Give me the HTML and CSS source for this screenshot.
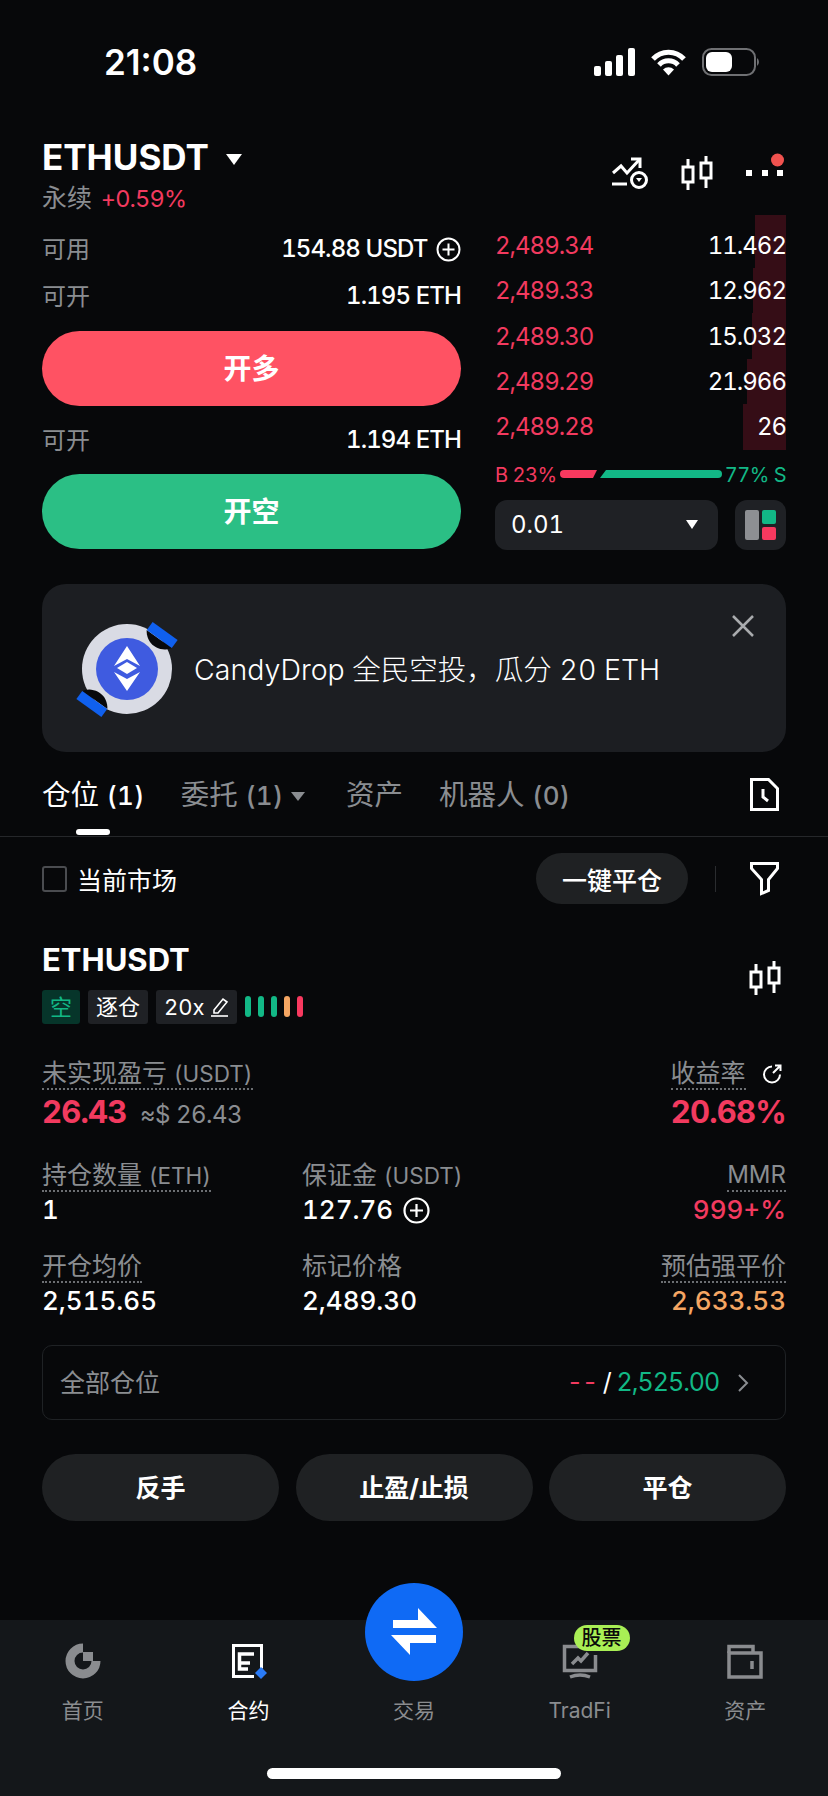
FILE: index.html
```html
<!DOCTYPE html>
<html lang="zh-CN">
<head>
  <meta charset="UTF-8">
  <meta name="viewport" content="width=device-width, initial-scale=1.0">
  <title>ETHUSDT</title>
  <link rel="stylesheet" href="styles.css">
</head>
<body>
  <div class="status">
    <span class="time">21:08</span>
    <svg class="status-icons" width="166" height="28" viewBox="0 0 166 28">
      <!-- signal -->
      <g fill="#fff">
        <rect x="0" y="18" width="7" height="10" rx="2"/>
        <rect x="11" y="13" width="7" height="15" rx="2"/>
        <rect x="22" y="7" width="7" height="21" rx="2"/>
        <rect x="34" y="0" width="7" height="28" rx="2"/>
      </g>
      <!-- wifi -->
      <g fill="none" stroke="#fff" stroke-width="5">
        <path d="M59 11a21 21 0 0 1 31 0"/>
        <path d="M65 17a13 13 0 0 1 19 0"/>
      </g>
      <path d="M69 21.500a8 8 0 0 1 11 0l-5.500 6z" fill="#fff"/>
      <!-- battery -->
      <rect x="109" y="1" width="52" height="26" rx="8.500" fill="none" stroke="#6f7073" stroke-width="2"/>
      <rect x="112" y="4" width="26" height="20" rx="6" fill="#fff"/>
      <path d="M163 10a5 5 0 0 1 0 8z" fill="#6f7073"/>
    </svg>
  </div>

  <header class="head">
    <div>
      <h1 class="pair">ETHUSDT <i class="caret caret-lg"></i></h1>
      <div class="pair-sub">永续 <span class="red">+0.59%</span></div>
    </div>
    <div class="head-icons">
      <svg width="36" height="34" viewBox="0 0 36 34" fill="none" stroke="#fff" stroke-width="3">
        <path d="M1 17l8-7 6 7 12-13"/>
        <path d="M19 3h9v9"/>
        <path d="M0 28h15"/>
        <circle cx="27" cy="24" r="7.500"/>
        <path d="M24 22h6l-3 4z" fill="#fff" stroke="none"/>
      </svg>
      <svg width="32" height="34" viewBox="0 0 32 34" fill="none" stroke="#fff" stroke-width="3">
        <rect x="2" y="11" width="10" height="15"/>
        <rect x="20" y="7" width="10" height="15"/>
        <path d="M7 3v8M7 26v8M25 0v7M25 22v10"/>
      </svg>
      <svg width="40" height="34" viewBox="0 0 40 34">
        <g fill="#fff">
          <rect x="0" y="14" width="6" height="6"/>
          <rect x="16" y="14" width="6" height="6"/>
          <rect x="31" y="14" width="6" height="6"/>
        </g>
        <circle cx="31.500" cy="4" r="6.500" fill="#f0524f"/>
      </svg>
    </div>
  </header>

  <section class="trade">
    <div class="order">
      <div class="kv"><span class="muted">可用</span><span>154.88 USDT
        <svg class="plus" width="25" height="25" viewBox="0 0 25 25" fill="none" stroke="#fff" stroke-width="2"><circle cx="12.500" cy="12.500" r="11"/><path d="M12.500 6.500v12M6.500 12.500h12"/></svg></span></div>
      <div class="kv"><span class="muted">可开</span><span>1.195 ETH</span></div>
      <button class="big-btn long">开多</button>
      <div class="kv"><span class="muted">可开</span><span>1.194 ETH</span></div>
      <button class="big-btn short">开空</button>
    </div>

    <div class="book">
      <div class="ob-row first"><i class="depth" style="width:31px"></i><span class="red">2,489.34</span><span class="qty">11.462</span></div>
      <div class="ob-row"><i class="depth" style="width:33px"></i><span class="red">2,489.33</span><span class="qty">12.962</span></div>
      <div class="ob-row"><i class="depth" style="width:34px"></i><span class="red">2,489.30</span><span class="qty">15.032</span></div>
      <div class="ob-row"><i class="depth" style="width:39px"></i><span class="red">2,489.29</span><span class="qty">21.966</span></div>
      <div class="ob-row"><i class="depth" style="width:43px"></i><span class="red">2,489.28</span><span class="qty">26</span></div>
      <div class="ratio">
        <span class="red">B 23%</span>
        <svg width="162" height="9" viewBox="0 0 162 9">
          <path d="M4 0h33l-4 8H4a4 4 0 0 1 0-8z" fill="#f8395f"/>
          <path d="M46 0h112a4 4 0 0 1 0 8H40z" fill="#12b886"/>
        </svg>
        <span class="green">77% S</span>
      </div>
      <div class="depth-tools">
        <div class="select"><span>0.01</span><i class="caret"></i></div>
        <div class="layout-btn">
          <svg width="31" height="30" viewBox="0 0 31 30">
            <rect x="0" y="0" width="14" height="30" rx="2" fill="#8d8f93"/>
            <rect x="17" y="0" width="14" height="14" rx="2" fill="#12b886"/>
            <rect x="17" y="17" width="14" height="13" rx="2" fill="#f8395f"/>
          </svg>
        </div>
      </div>
    </div>
  </section>

  <section class="banner">
    <svg class="drop-logo" width="110" height="100" viewBox="0 0 110 100">
      <circle cx="57" cy="51" r="45" fill="#d9dbe4"/>
      <circle cx="57" cy="51" r="31" fill="#3f5be0"/>
      <path d="M57 28l13 20-13-7-13 7z" fill="#fff"/>
      <path d="M57 44l10 6-10 6-10-6z" fill="#fff"/>
      <path d="M57 73L44 54l13 7 13-7z" fill="#fff"/>
      <path d="M76.700 12A18 18 0 0 0 101.700 30z" fill="#08090b"/>
      <path d="M79.700 8l25 18" stroke="#1060ee" stroke-width="10" fill="none"/>
      <g transform="rotate(180 57 51.500)">
        <path d="M76.700 12A18 18 0 0 0 101.700 30z" fill="#08090b"/>
        <path d="M79.700 8l25 18" stroke="#1060ee" stroke-width="10" fill="none"/>
      </g>
    </svg>
    <span class="banner-text">CandyDrop 全民空投，瓜分 20 ETH</span>
    <svg class="banner-close" width="24" height="24" viewBox="0 0 24 24" stroke="#a9abae" stroke-width="2.500" fill="none"><path d="M2 2l20 20M22 2L2 22"/></svg>
  </section>

  <nav class="tabs">
    <span class="tab active">仓位 <b>(1)</b></span>
    <span class="tab">委托 <b>(1)</b> <i class="caret caret-gray"></i></span>
    <span class="tab">资产</span>
    <span class="tab">机器人 <b>(0)</b></span>
    <svg class="tab-end" width="29" height="33" viewBox="0 0 29 33" fill="none" stroke="#fff" stroke-width="3">
      <path d="M1.500 1.500h17l9 9v21h-26z"/>
      <path d="M13 11v8l5 4"/>
    </svg>
  </nav>

  <div class="filter">
    <label class="only-market"><i class="check"></i>当前市场</label>
    <button class="close-all">一键平仓</button>
    <i class="filter-sep"></i>
    <svg width="29" height="33" viewBox="0 0 29 33" fill="none" stroke="#fff" stroke-width="3">
      <path d="M1.500 1.500h26v5l-9 11v11l-7 3v-14l-10-11z"/>
    </svg>
  </div>

  <section class="position">
    <div class="pos-head">
      <div>
        <h2 class="pos-name">ETHUSDT</h2>
        <div class="tags">
          <span class="tag tag-short">空</span>
          <span class="tag">逐仓</span>
          <span class="tag">20x
            <svg width="18" height="20" viewBox="0 0 18 20" fill="none" stroke="#fff" stroke-width="1.600"><path d="M3 13L12 2l4 3-9 11H3z"/><path d="M0 19h17"/></svg>
          </span>
          <div class="risk"><i></i><i></i><i></i><i class="o"></i><i class="r"></i></div>
        </div>
      </div>
      <svg class="pos-chart" width="32" height="34" viewBox="0 0 32 34" fill="none" stroke="#fff" stroke-width="3">
        <rect x="2" y="11" width="10" height="15"/>
        <rect x="20" y="7" width="10" height="15"/>
        <path d="M7 3v8M7 26v8M25 0v7M25 22v10"/>
      </svg>
    </div>

    <div class="stats">
      <div class="stat wide">
        <span class="lbl">未实现盈亏 <em>(USDT)</em></span>
        <div class="val val-lg"><span class="red">26.43</span> <small>≈$ 26.43</small></div>
      </div>
      <div class="stat right">
        <div class="rate-lbl"><span class="lbl">收益率</span>
          <svg class="refresh" width="20" height="20" viewBox="0 0 20 20" fill="none" stroke="#fff" stroke-width="2"><path d="M10 2.500a8 8 0 1 0 8 8"/><path d="M11 9l7-7M13 1.500h5.500V7"/></svg>
        </div>
        <div class="val val-lg red">20.68%</div>
      </div>

      <div class="stat">
        <span class="lbl">持仓数量 <em>(ETH)</em></span>
        <div class="val">1</div>
      </div>
      <div class="stat">
        <span class="lbl plain">保证金 <em>(USDT)</em></span>
        <div class="val">127.76
          <svg class="plus" width="27" height="27" viewBox="0 0 27 27" fill="none" stroke="#fff" stroke-width="2.200"><circle cx="13.500" cy="13.500" r="12"/><path d="M13.500 7v13M7 13.500h13"/></svg>
        </div>
      </div>
      <div class="stat right">
        <span class="lbl latin">MMR</span>
        <div class="val red">999+%</div>
      </div>

      <div class="stat">
        <span class="lbl">开仓均价</span>
        <div class="val">2,515.65</div>
      </div>
      <div class="stat">
        <span class="lbl plain">标记价格</span>
        <div class="val">2,489.30</div>
      </div>
      <div class="stat right">
        <span class="lbl">预估强平价</span>
        <div class="val orange">2,633.53</div>
      </div>
    </div>

    <div class="all-pos">
      <span class="muted">全部仓位</span>
      <span class="all-val"><span class="red">--</span> / <span class="green">2,525.00</span>
        <svg width="12" height="20" viewBox="0 0 12 20" fill="none" stroke="#8a8d91" stroke-width="2"><path d="M2 2l8 8-8 8"/></svg>
      </span>
    </div>

    <div class="pos-actions">
      <button>反手</button>
      <button>止盈/止损</button>
      <button>平仓</button>
    </div>
  </section>

  <footer class="bottom">
    <div class="fab">
      <svg width="98" height="98" viewBox="0 0 98 98" fill="#fff">
        <path d="M28 37h25V25l19 20H28z"/>
        <path d="M26 52h45v8H45v12z"/>
      </svg>
    </div>
    <div class="nav">
      <div class="nav-item">
        <svg width="36" height="36" viewBox="0 0 36 36" fill="none">
          <path d="M18 5A13 13 0 1 0 31 18" stroke="#8a8c8f" stroke-width="9"/>
          <rect x="18" y="9" width="10" height="9" fill="#8a8c8f"/>
        </svg>
        <span>首页</span>
      </div>
      <div class="nav-item active">
        <svg width="40" height="36" viewBox="0 0 40 36" fill="none" stroke="#fff" stroke-width="3">
          <path d="M26 33.500H5.500v-31h28v23"/>
          <path d="M26 11H11.500v15H20M11.500 20H22" stroke-width="3.500"/>
          <path d="M33 24l6 6-6 6-6-6z" fill="#2a7bf6" stroke="none"/>
        </svg>
        <span>合约</span>
      </div>
      <div class="nav-item">
        <i class="nav-gap"></i>
        <span>交易</span>
      </div>
      <div class="nav-item">
        <span class="badge">股票</span>
        <svg width="36" height="36" viewBox="0 0 36 36" fill="none" stroke="#8a8c8f" stroke-width="3.500">
          <path d="M24 3.500H2.500v24h31V12"/>
          <path d="M10 21l6-6 3 3 7-8"/>
          <path d="M8 34q10-4 20 0"/>
        </svg>
        <span>TradFi</span>
      </div>
      <div class="nav-item">
        <svg width="36" height="36" viewBox="0 0 36 36" fill="none" stroke="#8a8c8f" stroke-width="3.500">
          <path d="M2 10V3.500h24V10"/>
          <rect x="2" y="10" width="32" height="24"/>
          <path d="M25 18v8"/>
        </svg>
        <span>资产</span>
      </div>
    </div>
    <div class="home-bar"></div>
  </footer>
</body>
</html>
```

FILE: styles.css
```css
* {
  margin: 0;
  padding: 0;
  box-sizing: border-box;
}

body {
  width: 828px;
  height: 1796px;
  overflow: hidden;
  display: flex;
  flex-direction: column;
  background: #07080a;
  color: #fff;
  font-family: "Inter", "Noto Sans CJK SC", sans-serif;
  font-size: 24px;
  font-variant-numeric: tabular-nums;
}

button {
  font-family: inherit;
  border: none;
  color: #fff;
}

i {
  display: block;
}

svg {
  overflow: visible;
}

.red { color: #f23a5f; }
.green { color: #12b886; }
.orange { color: #f5a663; }
.muted { color: #8a8d91; }

.caret {
  width: 0;
  height: 0;
  border-left: 6px solid transparent;
  border-right: 6px solid transparent;
  border-top: 9px solid #fff;
}
.caret-lg {
  display: inline-block;
  margin-left: 8px;
  vertical-align: 5px;
  border-left-width: 8px;
  border-right-width: 8px;
  border-top-width: 11px;
}
.caret-gray {
  display: inline-block;
  margin-right: 5px;
  vertical-align: 4px;
  border-left-width: 7px;
  border-right-width: 7px;
  border-top-color: #8a8d91;
}

/* status bar */
.status {
  height: 132px;
  padding: 48px 68px 0 104px;
  display: flex;
  justify-content: space-between;
}
.time {
  font-size: 35px;
  font-weight: 600;
  line-height: 28px;
  font-variant-numeric: normal;
}
.status-icons {
  margin-left: auto;
}

/* header */
.head {
  height: 83px;
  padding: 0 42px;
  display: flex;
  justify-content: space-between;
}
.pair {
  font-size: 35px;
  font-weight: 700;
  line-height: 50px;
}
.pair-sub {
  font-size: 25px;
  line-height: 33px;
  color: #8a8d91;
}
.pair-sub .red {
  font-size: 23.5px;
  margin-left: 2px;
  letter-spacing: -0.8px;
}
.head-icons {
  display: flex;
  gap: 33px;
  padding-top: 24px;
}

/* order form + book */
.trade {
  display: grid;
  grid-template-columns: 419px 291px;
  gap: 34px;
  padding: 0 42px;
}
.order {
  padding-top: 10px;
}
.kv {
  height: 47px;
  padding-bottom: 1px;
  display: flex;
  justify-content: space-between;
  align-items: center;
  font-weight: 500;
  letter-spacing: -0.9px;
}
.kv .muted {
  margin-top: -2px;
  font-weight: 400;
  letter-spacing: 0;
}
.plus {
  margin-left: 3px;
  vertical-align: -5px;
}
.big-btn {
  display: block;
  width: 100%;
  height: 75px;
  padding-bottom: 3px;
  border-radius: 38px;
  font-size: 28px;
  font-weight: 700;
}
.long {
  margin: 12px 0 10px;
  background: #ff5263;
}
.short {
  margin-top: 11px;
  background: #2bbf85;
}

.ob-row {
  position: relative;
  height: 45.4px;
  display: flex;
  justify-content: space-between;
  align-items: center;
  font-size: 24px;
  letter-spacing: -1px;
}
.ob-row.first {
  height: 53px;
  padding-top: 7px;
}
.depth {
  position: absolute;
  top: 0;
  bottom: 0;
  right: 0;
  background: #350d16;
}
.ob-row span {
  position: relative;
}
.ratio {
  margin-top: 9.4px;
  height: 32px;
  display: flex;
  justify-content: space-between;
  align-items: center;
  font-size: 20px;
  letter-spacing: -0.5px;
}
.depth-tools {
  margin-top: 9px;
  display: flex;
  justify-content: space-between;
}
.select {
  width: 223px;
  height: 50px;
  padding: 0 20px 0 16px;
  border-radius: 12px;
  background: #1f2125;
  display: flex;
  justify-content: space-between;
  align-items: center;
}
.layout-btn {
  width: 51px;
  height: 50px;
  border-radius: 12px;
  background: #1f2125;
  display: flex;
  justify-content: center;
  align-items: center;
}

/* banner */
.banner {
  position: relative;
  margin: 34px 42px 0;
  height: 168px;
  border-radius: 24px;
  background: #1c1e22;
  display: flex;
  align-items: center;
  padding-left: 28px;
}
.drop-logo {
  margin-right: 14px;
}
.banner-text {
  font-size: 28.5px;
  font-weight: 300;
}
.banner-close {
  position: absolute;
  top: 30px;
  right: 31px;
}

/* tabs */
.tabs {
  position: relative;
  height: 85px;
  padding: 22px 42px 0;
  border-bottom: 1px solid #25272a;
  display: flex;
  gap: 36px;
  font-size: 28.5px;
  line-height: 42px;
  color: #8a8d91;
}
.tab b {
  font-weight: 500;
  font-size: 26px;
  letter-spacing: 0.3px;
}
.tab.active {
  color: #fff;
}
.tab.active::after {
  content: "";
  position: absolute;
  left: 76px;
  bottom: 1px;
  width: 34px;
  height: 6px;
  border-radius: 3px;
  background: #fff;
}
.tab-end {
  margin: 4px 7px 0 auto;
}

/* filter row */
.filter {
  height: 84px;
  padding: 0 49px 0 42px;
  display: flex;
  align-items: center;
}
.only-market {
  display: flex;
  align-items: center;
  gap: 10px;
  font-size: 25px;
  margin-right: auto;
}
.check {
  width: 25px;
  height: 26px;
  border: 2px solid #4a4c50;
  border-radius: 3px;
}
.close-all {
  width: 152px;
  height: 51px;
  border-radius: 26px;
  background: #1f2123;
  font-size: 25px;
  font-weight: 500;
}
.filter-sep {
  width: 1px;
  height: 26px;
  margin: 0 34px 0 27px;
  background: #2a2c2f;
}

/* position card */
.position {
  padding: 17px 42px 0;
}
.pos-head {
  display: flex;
  justify-content: space-between;
}
.pos-name {
  font-size: 31px;
  font-weight: 700;
  line-height: 44px;
}
.pos-chart {
  margin: 23px 5px 0 0;
}
.tags {
  margin-top: 8px;
  display: flex;
  gap: 8px;
  height: 34px;
}
.tag {
  padding: 0 8px;
  border-radius: 3px;
  background: #1f2125;
  font-size: 22px;
  line-height: 34px;
  display: flex;
  align-items: center;
  gap: 6px;
}
.tag-short {
  background: #06352a;
  color: #12b886;
}
.risk {
  display: flex;
  gap: 7px;
  align-items: center;
}
.risk i {
  width: 6px;
  height: 21px;
  border-radius: 3px;
  background: #12b886;
}
.risk i.o { background: #f5a663; }
.risk i.r { background: #f8395f; }

.stats {
  margin-top: 34px;
  display: grid;
  grid-template-columns: 260px 1fr auto;
  row-gap: 23px;
}
.stat.wide {
  grid-column: 1 / 3;
}
.stat.right {
  text-align: right;
}
.lbl {
  display: inline-block;
  height: 32px;
  line-height: 30px;
  font-size: 25px;
  color: #8a8d91;
  border-bottom: 2px dotted #6c6f73;
}
.lbl em {
  font-style: normal;
  font-size: 22.5px;
}
.lbl.latin {
  font-size: 24px;
}
.lbl.plain {
  border-bottom: none;
}
.rate-lbl {
  margin-right: 4px;
}
.refresh {
  margin-left: 10px;
  vertical-align: -2px;
}
.val {
  font-size: 26px;
  font-weight: 500;
  line-height: 36px;
}
.val-lg {
  font-size: 31px;
  font-weight: 700;
  line-height: 44px;
  letter-spacing: -0.8px;
}
.val small {
  margin-left: 6px;
  font-size: 24px;
  font-weight: 400;
  letter-spacing: -0.5px;
  color: #8a8d91;
}

.all-pos {
  margin-top: 26px;
  height: 75px;
  padding: 0 36px 0 17px;
  border: 1px solid #1f2225;
  border-radius: 10px;
  display: flex;
  justify-content: space-between;
  align-items: center;
  font-size: 25px;
}
.all-pos .muted {
  margin-top: -2px;
}
.all-val {
  letter-spacing: -1px;
}
.all-val svg {
  margin-left: 12px;
  vertical-align: -2px;
}
.pos-actions {
  margin-top: 34px;
  display: grid;
  grid-template-columns: repeat(3, 1fr);
  gap: 16.5px;
}
.pos-actions button {
  height: 67px;
  padding-bottom: 2px;
  border-radius: 34px;
  background: #1f2123;
  font-size: 25px;
  font-weight: 700;
}

/* bottom nav */
.bottom {
  position: relative;
  margin-top: auto;
  height: 176px;
  background: #14171a;
}
.fab {
  position: absolute;
  top: -37px;
  left: 365px;
  width: 98px;
  height: 98px;
  border-radius: 50%;
  background: #0f6af5;
}
.nav {
  display: grid;
  grid-template-columns: repeat(5, 1fr);
  padding-top: 23px;
}
.nav-item {
  position: relative;
  display: flex;
  flex-direction: column;
  align-items: center;
  font-size: 21px;
  line-height: 30px;
  color: #8a8c8f;
}
.nav-item svg {
  height: 36px;
}
.nav-item span:last-child {
  margin-top: 17px;
}
.nav-item.active {
  color: #fff;
}
.nav-gap {
  height: 36px;
}
.badge {
  position: absolute;
  top: -18px;
  left: 50%;
  margin-left: -6px;
  width: 56px;
  height: 26px;
  border-radius: 13px;
  background: #a9ef55;
  color: #0a0a0a;
  font-size: 20px;
  font-weight: 500;
  line-height: 26px;
  text-align: center;
  z-index: 1;
}
.home-bar {
  width: 294px;
  height: 11px;
  margin: 42px auto 0;
  border-radius: 6px;
  background: #fff;
}
```
